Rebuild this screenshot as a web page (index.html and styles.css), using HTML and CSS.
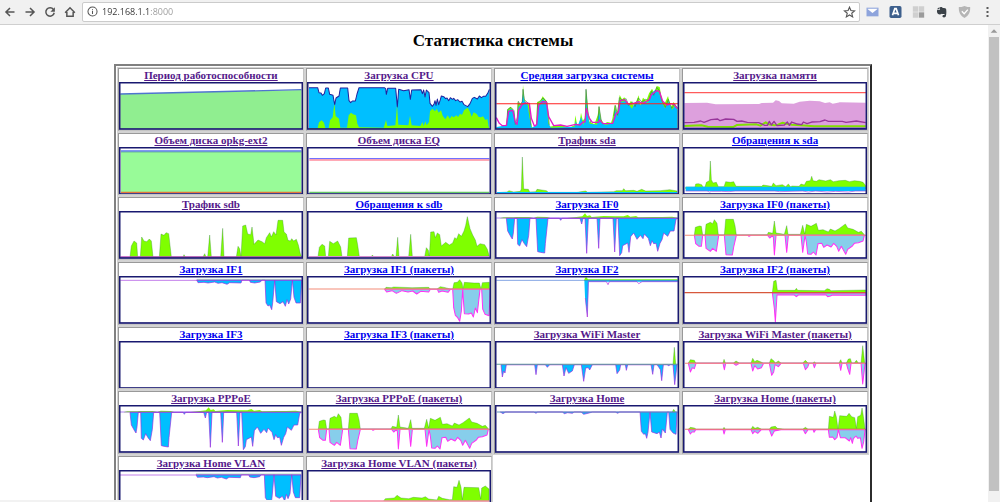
FILE: index.html
```html
<!DOCTYPE html>
<html lang="ru">
<head>
<meta charset="utf-8">
<title>Статистика системы</title>
<link rel="stylesheet" href="styles.css">
</head>
<body>
<header class="toolbar">
  <nav class="nav">
    <button class="tool" aria-label="Назад"><svg viewBox="0 0 16 16"><path class="ico" d="M14 8H3M8 2.6 2.6 8 8 13.4"/></svg></button>
    <button class="tool" aria-label="Вперёд"><svg viewBox="0 0 16 16"><path class="ico" d="M2 8h11M8 2.6 13.4 8 8 13.4"/></svg></button>
    <button class="tool" aria-label="Обновить"><svg viewBox="0 0 16 16"><path class="ico" d="M12.6 4.6A5.6 5.6 0 1 0 13.6 9"/><path class="solid" d="M14.5 1.5v6h-6z"/></svg></button>
    <button class="tool" aria-label="Домой"><svg viewBox="0 0 16 16"><path class="ico" d="M1.5 9 8 2.4 14.5 9M3.8 8v5.6h8.4V8"/></svg></button>
  </nav>
  <form class="omnibox">
    <svg class="info" viewBox="0 0 16 16"><circle class="ico thin" cx="8" cy="8" r="6.6"/><path class="ico thin" d="M8 7v4.6M8 4.2v1.4"/></svg>
    <input class="address" type="text" aria-label="Адрес" value="192.168.1.1:8000">
    <button class="tool" type="button" aria-label="В закладки"><svg viewBox="0 0 16 16"><path class="ico thin" d="m8 1.6 1.900 4.500 4.800.4-3.700 3.200 1.200 4.800L8 11.900l-4.200 2.600L5 9.700 1.300 6.500l4.800-.4z"/></svg></button>
  </form>
  <div class="extensions">
    <button class="tool" aria-label="Почта"><svg viewBox="0 0 36 36"><path fill="#8ea4dc" d="M0 5h36v26H0z"/><path fill="#fff" d="m3 9 15 12L33 9v-1H3z"/></svg></button>
    <button class="tool" aria-label="Переводчик"><svg viewBox="0 0 36 36"><rect width="36" height="36" rx="5" fill="#3d5f8c"/><path fill="none" stroke="#fff" stroke-width="5" d="m9 28 7-20h4l7 20M12 22h12"/></svg></button>
    <button class="tool" aria-label="Плитки"><svg viewBox="0 0 36 36"><path fill="#cfcfcf" d="M1 1h16v16H1zM19 1h16v16H19zM1 19h16v16H1z"/><path fill="#9b9b9b" d="M19 19h16v16H19z"/></svg></button>
    <button class="tool" aria-label="Заметки"><svg viewBox="0 0 36 36"><path fill="#3b4248" d="M4 10l8-7v7zM14 3c4-1 7 1 8 3 5 0 9 0 10 4 1 7 1 14-1 21-1 4-8 4-10 1-1-4 2-6 6-5v-3c-4 0-6 1-8-1-3 3-9 3-12 0-3-4-3-8-2-11h8z"/></svg></button>
    <button class="tool" aria-label="Защита"><svg viewBox="0 0 36 36"><path fill="#b5b5b5" d="M18 0c6 3 12 3 17 3 1 15-4 26-17 33C5 29 0 18 1 3c5 0 11 0 17-3z"/><path fill="none" stroke="#fff" stroke-width="4" d="m10 16 7 7 11-12"/></svg></button>
    <button class="tool" aria-label="Меню"><svg viewBox="0 0 36 36"><path fill="#5a5a5a" d="M15 3h6v6h-6zM15 15h6v6h-6zM15 27h6v6h-6z"/></svg></button>
  </div>
</header>

<div class="viewport">
<main class="page">
<h1 class="title">Статистика системы</h1>
<table class="stats">
<tr>
<td><a class="seen" href="#uptime">Период работоспособности</a>
<svg class="chart" viewBox="0 0 552 143"><g transform="translate(-23 -60)"><path fill="#90ee90" d="M27 96 570 84V200H27z"/><path class="line" stroke="#4f74cf" d="M27 96 570 83"/></g><rect class="frame"/></svg></td>
<td><a class="seen" href="#cpu">Загрузка CPU</a>
<svg class="chart" viewBox="0 0 552 143"><g transform="translate(-10 -60)"><path class="sky" d="M16 200V77H42L46 92 52 93 56 100 62 95 66 78H74L78 97 88 100 93 128 97 108 106 102 110 78H132L136 116 141 122 146 117H155L160 96 166 77H242L246 80 248 97 252 79H276L281 135 285 82 300 86 316 83 320 112 324 84 352 83 356 95 360 84 364 105 368 84 376 92 379 124 386 133 391 126 394 116 397 130 401 111 405 128 410 113 413 102 420 104 426 110 430 108 435 116 440 107 446 112 450 109 456 116 462 113 469 120 475 118 481 128 492 134 499 125 506 109 512 106 521 111 527 102 533 107 539 103 546 103 552 94 557 82V200z"/><path class="line medium" stroke="#20209d" d="M16 77H42L46 92 52 93 56 100 62 95 66 78H74L78 97 88 100 93 128 97 108 106 102 110 78H132L136 116 141 122 146 117H155L160 96 166 77H242L246 80 248 97 252 79H276L281 135 285 82 300 86 316 83 320 112 324 84 352 83 356 95 360 84 364 105 368 84 376 92 379 124 386 133 391 126 394 116 397 130 401 111 405 128 410 113 413 102 420 104 426 110 430 108 435 116 440 107 446 112 450 109 456 116 462 113 469 120 475 118 481 128 492 134 499 125 506 109 512 106 521 111 527 102 533 107 539 103 546 103 552 94 557 82"/><path class="lime" d="M16 198H42L46 181 54 175 61 182 65 198H75L79 175 87 166 92 125 96 162 106 170 110 197H130L135 160 142 152 148 157 157 160 161 185 166 196 240 197 247 174 251 192 275 190 280 130 284 188 314 190 319 161 324 190 350 192 356 180 360 192 365 178 369 190 376 180 379 148 386 140 394 148 399 140 405 152 412 145 417 161 425 172 432 160 438 170 444 162 450 166 458 160 463 165 469 156 475 158 481 145 492 137 498 148 504 164 510 151 519 156 525 165 532 166 538 163 545 174 551 171 555 194 557 200H16z"/></g><rect class="frame"/></svg></td>
<td><a href="#load">Средняя загрузка системы</a>
<svg class="chart" viewBox="0 0 552 143"><g transform="translate(-14 -60)"><path class="lime" d="M18 196 48 193 51 143 60 134 68 143 74 190 79 187 82 120 90 128 96 120 98 68 102 110 107 123 117 128 121 180 126 197 138 192 140 120 150 117 157 103 168 116 173 155 177 194 205 189 240 196 252 190 255 160 260 187 267 189 272 152 277 175 283 170 287 78 292 130 296 178 312 187 322 160 326 130 332 172 342 186 350 180 362 182 366 170 373 128 380 152 388 99 395 112 402 106 414 130 422 116 430 132 437 120 445 100 450 128 458 107 468 116 476 94 485 80 492 94 499 72 508 75 514 110 522 126 533 102 541 136 550 120 561 138V199H18z"/><path class="sky" d="M18 199 19 195 49 190 52 148 62 140 71 148 76 191 82 170 84 135 94 126 98 95 102 116 112 128 117 165 124 197 139 189 142 135 150 119 159 112 169 124 174 185 182 197 253 194 256 178 262 192 272 165 280 190 286 155 287 98 292 159 298 185 320 188 326 150 332 180 345 189 368 184 374 140 381 164 388 115 395 120 406 117 414 126 425 140 432 126 443 118 450 130 462 118 473 122 483 94 495 83 506 92 514 119 524 139 535 118 545 143 554 131 561 143V199z"/><path class="line hair" stroke="#3c7f50" d="M49 190 52 142 62 136 71 146 75 188 81 165 84 118 90 129 96 118 98 82 102 113 117 127 122 190M139 187 142 123 158 108 170 120 177 190M285 172 287 82 293 155 301 181M323 178 326 134 333 178M371 162 375 130 382 160 387 107 396 115 407 110 415 130 426 120 434 134 444 108 455 120 466 112 475 116 483 88 490 100 499 76 507 86 514 115 525 136 534 112 544 139 553 126 561 138"/><path class="line" stroke="#e619c7" d="M18 167 27 184 36 191 48 190 55 148 67 145 75 180 80 187 85 145 95 128 104 123 117 124 123 169 132 192 139 188 145 130 156 119 168 120 175 164 190 191 211 189 230 193 256 187 269 189 278 180 284 180 288 139 296 167 306 181 325 181 328 174 338 185 367 184 377 155 384 151 390 116 402 113 414 126 428 125 444 119 458 124 470 117 477 113 483 98 499 86 507 88 517 118 530 129 542 125 551 128 561 140"/><path class="line medium" stroke="#ff2020" d="M18 125H563"/></g><rect class="frame"/></svg></td>
<td><a class="seen" href="#memory">Загрузка памяти</a>
<svg class="chart" viewBox="0 0 552 143"><g transform="translate(-12 -60)"><path fill="#dda0dd" d="M16 123 84 122 110 127 240 126 248 123 282 122 290 115 300 117 308 124 344 125 362 119 392 116 422 118 438 123 452 121 461 125 482 121 560 122V198H16z"/><path class="line" stroke="#ff5b5b" d="M16 92H562"/><path class="line bold" stroke="#80e000" d="M16 192 67 190 86 194 162 195 173 189 232 187 244 191 260 181 269 187 286 190 297 188 311 182 321 185 339 188 365 190 405 193H560"/><path class="line" stroke="#98359b" d="M16 182 45 181 65 177 75 181 96 173 116 171 123 176 140 171 164 172 174 178 188 177 205 181 239 182 257 190 265 190 271 178 277 189 285 178 294 191 316 189 325 180 331 190 338 180 355 186 368 188 373 180 384 185 398 180 423 179 438 174 448 178 490 178 501 181 532 177 560 182"/><path class="line" stroke="#22229e" d="M16 199H560"/></g><rect class="frame"/></svg></td>
</tr>
<tr>
<td><a class="seen" href="#opkg">Объем диска opkg-ext2</a>
<svg class="chart" viewBox="0 0 552 143"><g transform="translate(-23 -254)"><path fill="#98fb98" d="M29 266H570V391H29z"/><path class="line" stroke="#5a74ef" d="M29 266H570"/><path class="line hair" stroke="#71bb9a" d="M29 270H570"/><path class="line" stroke="#e3753a" d="M29 390H570"/></g><rect class="frame"/></svg></td>
<td><a class="seen" href="#eq">Объем диска EQ</a>
<svg class="chart" viewBox="0 0 552 143"><g transform="translate(-10 -254)"><path class="line" stroke="#7171ff" d="M17 289H557"/><path class="line" stroke="#ff8c9c" d="M17 293H557"/><path class="line" stroke="#65c765" d="M17 390H557"/></g><rect class="frame"/></svg></td>
<td><a class="seen" href="#sda">Трафик sda</a>
<svg class="chart" viewBox="0 0 552 143"><g transform="translate(-14 -254)"><path class="lime edge" d="M20 391 50 389 56 385 70 389 90 387 93 380 96 284 100 380 114 381 118 389 136 388 140 381 168 385 174 390 260 390 286 386 292 390 370 388 378 385 396 385 400 379 406 385 430 384 440 387 454 381 466 386 510 385 538 382 560 386V392H20z"/><path class="line" stroke="#00bfff" d="M20 391H560"/></g><rect class="frame"/></svg></td>
<td><a href="#sda-io">Обращения к sda</a>
<svg class="chart" viewBox="0 0 552 143"><g transform="translate(-12 -254)"><path class="lime edge" d="M20 374H48L50 365 58 364 68 367 72 374H78L82 360 91 355 94 296 97 352 102 362 112 360 118 373H135L140 358 154 360 164 358 171 372H248L252 368 278 372 283 362 291 370 310 367 320 373 328 365 334 373 340 371 360 372 366 365 376 368 382 357 394 355 398 342 402 355 412 357 420 352 440 356 454 352 463 358 480 355 499 354 511 358 526 355 542 357 552 360 560 370V380H20z"/><path class="sky" d="M20 373H560V386H20z"/><path class="line hair" stroke="#9a42e5" d="M20 386H84L92 389 98 387 128 387 150 388 170 386H286L302 388 370 386 388 389 410 386 444 389 470 387 508 389 530 386H560"/></g><rect class="frame"/></svg></td>
</tr>
<tr>
<td><a class="seen" href="#sdb">Трафик sdb</a>
<svg class="chart" viewBox="0 0 552 143"><g transform="translate(-23 -52)"><path class="lime edge" d="M56 190 60 157 68 142 76 148 79 190H87L91 130 98 142 106 144 114 136 120 142 125 190H144L149 121 158 125 164 117 172 120 180 190H215L218 183 222 190H275L280 180 284 190H289L295 124 300 190H328L334 104 338 190H375L380 158 385 165 389 190 394 97 403 94 409 121 418 123 422 100 428 152 440 139 452 144 460 150 465 132 475 117 480 130 487 114 494 124 500 80H514L518 115 525 121 530 140 537 142 541 135 547 142 555 137 561 154 567 180 571 190z"/><path class="line" stroke="#bd4bbd" d="M27 190H570"/></g><rect class="frame"/></svg></td>
<td><a href="#sdb-io">Обращения к sdb</a>
<svg class="chart" viewBox="0 0 552 143"><g transform="translate(-585 -52)"><path class="lime edge" d="M618 189 622 161 630 152 638 157 641 189H649L653 143 664 150 677 142 686 160 690 189H706L710 133 733 132 737 154 742 189H778L781 184 785 189H838L842 181 847 189H852L857 131 861 189H890L896 122 901 189H938L943 162 949 170 952 189 956 115 966 114 970 132 976 118 983 123 988 157 1001 146 1012 154 1022 148 1028 132 1034 136 1040 120 1048 128 1056 112 1061 95 1066 69 1074 105 1082 124 1090 139 1095 158 1104 150 1118 153 1126 167 1132 188z"/><path class="line" stroke="#d58cce" d="M591 189H1132"/></g><rect class="frame"/></svg></td>
<td><a href="#if0">Загрузка IF0</a>
<svg class="chart" viewBox="0 0 552 143"><g id="if0-bytes" transform="translate(-14 -52)"><path class="lime" d="M30 73 40 71 70 71 80 70 116 70 130 73 140 69 170 70 180 73 230 73 258 70 276 68 284 59 290 67 299 65 304 70 340 67 376 68 400 68 412 64 420 69 437 67 444 71 490 70 516 70 545 69 562 72V74H30z"/><path class="sky vio" d="M48 74 52 112 62 130 66 136 69 118 73 74H80L82 152 88 157 95 138 102 150 109 159 115 125 119 74H137L142 174 150 176 163 178 165 150 173 74H207L211 80 215 74H269L274 91 278 74H284L289 179 294 74H320L325 164 329 74H368L373 175 378 74H383L388 186 394 177 397 156 412 148 416 176 421 129 430 118 440 137 450 125 458 135 462 121 474 134 480 156 485 141 490 150 497 149 502 173 509 149 515 138 520 118 532 128 540 112 551 112 557 77 562 74z"/><path class="line hair" stroke="#8540e8" d="M18 73H562"/></g><rect class="frame"/></svg></td>
<td><a href="#if0-packets">Загрузка IF0 (пакеты)</a>
<svg class="chart" viewBox="0 0 552 143"><g id="if0-pk" transform="translate(-576 -52)"><path class="lime edge" d="M610 124 613 101 625 97 631 98 635 124H642L645 92 658 86 665 90 670 78 678 89 682 124H700L704 77H727L732 96 736 124H828L832 116 845 119 850 82 855 118 880 122 887 96 891 122H928L935 95 941 121 946 92 960 98 976 89 982 110 996 108 1012 115 1018 106 1032 112 1044 105 1063 91 1070 103 1086 107 1102 116 1111 113 1120 123z"/><path class="pale pink" d="M610 125 614 150 624 158 631 158 635 125H642L645 164 658 173 665 164 676 173 683 125H700L705 183 724 184 728 160 736 125H770L774 128 780 125H830L836 133 843 127 847 130 850 184 855 125H882L887 176 892 125H930L935 176 942 125 946 145 950 181 960 182 967 175 975 184 981 150 992 149 998 161 1008 154 1020 160 1028 149 1037 158 1043 173 1051 158 1064 182 1070 167 1084 157 1090 149 1102 147 1116 142 1120 125z"/><path class="line medium" stroke="#f38b78" d="M582 125H1125"/></g><rect class="frame"/></svg></td>
</tr>
<tr>
<td><a href="#if1">Загрузка IF1</a>
<svg class="chart" viewBox="0 0 552 143"><g id="if1-bytes" transform="translate(-23 -247)"><path class="sky vio" d="M256 259 260 267 278 266 290 268 310 265 320 269 332 267 347 272 355 267 389 268 392 259H414L417 266 430 268 447 265 452 259H461L464 328 470 337 475 334 481 348 484 327 490 259 495 324 506 330 515 324 522 338 527 318 532 331 538 316 543 259 548 311 554 328 567 328 571 259z"/><path class="line hair" stroke="#82cd9b" d="M256 257H570"/><path class="line hair" stroke="#a43de0" d="M27 260H570"/></g><rect class="frame"/></svg></td>
<td><a href="#if1-packets">Загрузка IF1 (пакеты)</a>
<svg class="chart" viewBox="0 0 552 143"><g transform="translate(-585 -247)"><path class="lime edge" d="M818 286 822 281 838 282 845 280 900 282 950 281 955 286H975L985 279 1000 282 1015 286H1022L1026 267 1036 266 1043 258 1050 268 1053 286 1057 266 1086 268 1102 268 1107 286 1111 267 1132 266V286z"/><path class="pale pink" d="M818 287 824 295 840 291 853 299 870 291 888 295 902 292 914 301 926 293 950 295 955 287H976L980 296 990 292 1008 296 1015 287H1022L1025 342 1030 365 1037 372 1043 383 1048 352 1052 287 1057 360 1070 361 1078 358 1084 370 1090 343 1096 357 1104 287H1109L1112 346 1119 362 1131 366 1135 287z"/><path class="line medium" stroke="#f38b78" d="M590 286H1134"/></g><rect class="frame"/></svg></td>
<td><a href="#if2">Загрузка IF2</a>
<svg class="chart" viewBox="0 0 552 143"><g transform="translate(-14 -247)"><path class="lime" d="M282 257 287 249 293 257H562V262H282z"/><path class="sky" d="M282 260H562V264H295L291 370 284 310z"/><path class="line hair" stroke="#b526db" d="M285 313 291 370 294 264H348L353 273 357 264H440L445 270 455 264H562"/><path class="line hair" stroke="#4477d4" d="M18 260H562"/></g><rect class="frame"/></svg></td>
<td><a href="#if2-packets">Загрузка IF2 (пакеты)</a>
<svg class="chart" viewBox="0 0 552 143"><g transform="translate(-576 -247)"><path class="lime edge" d="M844 297 848 263 855 260 859 290H912L916 284 920 290 1000 291 1008 285 1015 287 1020 291 1124 289V298H844z"/><path class="pale pink" d="M844 298 850 345 853 385 858 303 910 304 916 309 922 304 1004 303 1010 309 1018 307 1024 304 1124 305V298z"/><path class="line" stroke="#d7583c" d="M580 297H1124"/></g><rect class="frame"/></svg></td>
</tr>
<tr>
<td><a href="#if3">Загрузка IF3</a>
<svg class="chart" viewBox="0 0 552 143"><rect class="frame"/></svg></td>
<td><a href="#if3-packets">Загрузка IF3 (пакеты)</a>
<svg class="chart" viewBox="0 0 552 143"><rect class="frame"/></svg></td>
<td><a class="seen" href="#wifi">Загрузка WiFi Master</a>
<svg class="chart" viewBox="0 0 552 143"><g transform="translate(-14 -50)"><path class="sky vio" d="M32 121 36 158 40 140 44 146 48 121H133L137 151 141 121H165L171 129 178 121H216L221 155 227 130 235 147 246 140 252 121H273L280 171 286 131 294 130 298 137 306 121H376L380 148 388 137 391 121H405L408 138 412 121H482L487 150 491 121H500L505 128 510 136 514 169 519 121H530L535 124 540 121H548L553 181 560 121z"/><path class="lime edge" d="M548 120 552 69 556 120z"/><path class="line medium" stroke="#5f9e9a" d="M18 120H562"/></g><rect class="frame"/></svg></td>
<td><a class="seen" href="#wifi-packets">Загрузка WiFi Master (пакеты)</a>
<svg class="chart" viewBox="0 0 552 143"><g transform="translate(-576 -50)"><path class="lime edge" d="M592 116 598 106 610 108 614 116H696L699 105 703 116H727L735 110 745 116H780L785 102 791 112 798 108 810 113 816 116H835L840 103 848 109 853 116 862 110 870 116H935L943 108 951 116H966L970 112 974 116H1044L1049 106 1053 116H1066L1072 104 1078 103 1082 116H1090L1096 108 1102 116H1110L1115 64 1121 116z"/><path class="pale pink" d="M592 117 598 143 604 130 610 133 615 117H696L700 136 704 117H727L735 123 745 117H780L785 140 791 124 800 134 811 130 818 117H835L842 153 848 143 852 121 862 127 870 117H937L943 136 950 128 954 117H966L970 130 975 117H1045L1049 138 1053 117H1066L1070 132 1076 150 1080 117H1110L1115 179 1122 117z"/><path class="line medium" stroke="#f38b78" d="M582 117H1125"/></g><rect class="frame"/></svg></td>
</tr>
<tr>
<td><a class="seen" href="#pppoe">Загрузка PPPoE</a>
<svg class="chart" viewBox="0 0 552 143"><use href="#if0-bytes" x="-1"/><rect class="frame"/></svg></td>
<td><a class="seen" href="#pppoe-packets">Загрузка PPPoE (пакеты)</a>
<svg class="chart" viewBox="0 0 552 143"><use href="#if0-pk"/><rect class="frame"/></svg></td>
<td><a class="seen" href="#home">Загрузка Home</a>
<svg class="chart" viewBox="0 0 552 143"><g transform="translate(-14 -244)"><path class="sky vio" d="M30 265 38 270 46 265H130L137 269 142 265H216L222 270 232 267 246 269 252 265H272L280 272 300 267 306 265H375L382 269 388 265H449L453 323 460 332 465 330 469 344 473 325 479 265 484 325 500 330 507 325 512 343 516 316 525 328 531 265H535L539 317 548 328 557 332 560 265z"/><path class="lime edge" d="M546 264 550 257 555 264z"/><path class="line medium" stroke="#5e93bd" d="M20 265H562"/></g><rect class="frame"/></svg></td>
<td><a class="seen" href="#home-packets">Загрузка Home (пакеты)</a>
<svg class="chart" viewBox="0 0 552 143"><g transform="translate(-576 -244)"><path class="lime edge" d="M592 317 598 311 610 313 616 317H696L699 311 703 317H780L785 308 792 314 800 311 812 317H835L840 310 853 308 859 314 880 317H935L943 311 951 317H1012L1015 278 1027 281 1031 262 1036 280 1041 317 1046 276 1067 278 1074 269 1082 279 1091 282 1096 314 1100 279 1109 275 1113 253 1117 278 1122 316z"/><path class="pale pink" d="M592 318 598 331 603 325 610 325 614 318H696L699 331 703 318H780L785 330 791 323 800 329 811 318H835L842 337 850 322 870 318H937L943 330 951 318H966L969 326 974 318H1012L1015 341 1025 340 1031 348 1038 341 1042 318 1048 342 1062 342 1075 352 1079 342 1084 359 1087 345 1095 337 1100 344 1108 342 1113 374 1118 354 1122 318z"/><path class="line medium" stroke="#ee7770" d="M582 317H1125"/></g><rect class="frame"/></svg></td>
</tr>
<tr>
<td><a class="seen" href="#vlan">Загрузка Home VLAN</a>
<svg class="chart" viewBox="0 0 552 143"><use href="#if1-bytes" x="-2" y="2"/><rect class="frame"/></svg></td>
<td><a class="seen" href="#vlan-packets">Загрузка Home VLAN (пакеты)</a>
<svg class="chart" viewBox="0 0 552 143"><g transform="translate(-585 -437)"><path class="lime edge" d="M815 529 820 523 847 521 855 513 867 521 890 523 904 519 930 521 940 517 950 524 975 527 980 516 991 522 1012 526 1021 526 1025 487 1035 489 1041 468 1047 489 1051 526 1056 489 1100 490 1106 524 1109 491 1120 485 1131 494V530z"/><path class="line" stroke="#f58ba2" d="M591 530H1132"/></g><rect class="frame"/></svg></td>
</tr>
</table>
</main>
<div class="scrollbar"><svg class="arrow" viewBox="0 0 12 12"><path fill="#999" d="m6 4 4 4H2z"/></svg><div class="thumb"></div></div>
<div class="status"></div>
</div>
</body>
</html>
```
FILE: styles.css
```css
* {
  box-sizing: border-box;
}

body {
  margin: 0;
  height: 100vh;
  display: flex;
  flex-direction: column;
  overflow: hidden;
  background: #fff;
  font-family: "Liberation Serif", "Times New Roman", serif;
}

.toolbar {
  flex: none;
  display: flex;
  align-items: center;
  gap: 2px;
  height: 25px;
  padding: 0 6px 1px 3px;
  background: #f1f1f1;
  border-bottom: 1px solid #cfcfcf;
}

.nav {
  display: flex;
  gap: 6px;
  padding-right: 3px;
}

.tool {
  flex: none;
  width: 13px;
  height: 12px;
  padding: 0;
  border: 0;
  background: none;
}

.tool svg {
  display: block;
  width: 100%;
  height: 100%;
}

.nav .tool {
  width: 14px;
}

.ico {
  fill: none;
  stroke: #555;
  stroke-width: 2;
}

.thin {
  stroke-width: 1.5;
}

.solid {
  fill: #555;
}

.omnibox {
  flex: 1;
  display: flex;
  align-items: center;
  gap: 4px;
  height: 20px;
  padding: 0 3px 0 4px;
  background: #fff;
  border: 1px solid #cbcbcb;
  border-radius: 2px;
}

.info {
  flex: none;
  width: 11px;
  height: 11px;
}

.address {
  flex: 1;
  min-width: 0;
  padding: 0;
  border: 0;
  outline: 0;
  font: 9px "Open Sans", sans-serif;
  color: transparent;
  background: linear-gradient(90deg, #333 49px, #999 49px);
  -webkit-background-clip: text;
  background-clip: text;
}

.extensions {
  display: flex;
  gap: 10px;
  padding-left: 4px;
}

.viewport {
  position: relative;
  flex: 1;
  min-height: 0;
  display: flex;
}

.page {
  flex: 1;
  padding: 0 9px 0 7px;
  overflow: hidden;
}

.title {
  margin: 6px 0 13px;
  font-size: 17px;
  line-height: 20px;
  text-align: center;
}

.stats {
  width: 78%;
  margin: 0 auto;
  table-layout: fixed;
  border: 2px solid;
  border-color: #808080 #2c2c2c #2c2c2c #808080;
  border-spacing: 2px;
}

.stats td {
  padding: 0;
  border: 1px solid;
  border-color: #999 #c4c4c4 #c4c4c4 #999;
  box-shadow: 0 0 0 1px #d3d3d3;
  text-align: center;
  vertical-align: top;
}

.stats a {
  display: block;
  font-size: 11px;
  line-height: 13px;
  font-weight: bold;
  white-space: nowrap;
  color: #0000ee;
}

.stats .seen {
  color: #551a8b;
}

.chart {
  display: block;
  width: 100%;
  background: #fff;
}

.frame {
  x: 2px;
  y: 2px;
  width: 548px;
  height: 139px;
  fill: none;
  stroke: #191970;
  stroke-width: 5;
}

.line {
  fill: none;
  stroke-width: 4;
  stroke-linejoin: round;
}

.hair {
  stroke-width: 2;
}

.medium {
  stroke-width: 3;
}

.bold {
  stroke-width: 6;
}

.sky {
  fill: #00bfff;
}

.lime {
  fill: #7fff00;
}

.pale {
  fill: #87ceeb;
}

.edge {
  stroke: #2f8a2a;
  stroke-width: 1;
}

.vio {
  stroke: #9a2be0;
  stroke-width: 2;
  stroke-linejoin: round;
}

.pink {
  stroke: #ff30f5;
  stroke-width: 3;
  stroke-linejoin: round;
}

.scrollbar {
  flex: none;
  display: flex;
  flex-direction: column;
  width: 12px;
  padding: 0 1px 11px;
  background: #f1f1f1;
}

.arrow {
  flex: none;
  height: 12px;
}

.thumb {
  flex: 1;
  background: #c1c1c1;
}

.status {
  position: absolute;
  left: 0;
  bottom: 0;
  width: 33%;
  height: 2px;
  background: #f2f2f2;
}
```
